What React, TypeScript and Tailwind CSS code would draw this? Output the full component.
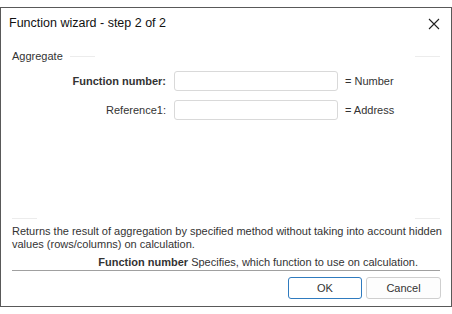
import React from "react";

export default function App() {
  const font = { fontFamily: '"Liberation Sans", Arial, sans-serif' };
  return (
    <div className="w-[452px] h-[314px] bg-white pt-[7px]" style={font}>
      <div className="w-[452px] h-[300px] border border-[#595959] bg-white flex flex-col text-[11px] text-[#333]">
        <div className="h-[31px] flex items-center justify-between pl-[8px] pr-[10px] shrink-0">
          <span className="text-[12.5px] text-[#111] leading-none">Function wizard - step 2 of 2</span>
          <svg width="12" height="12" viewBox="0 0 12 12" className="mr-[1px]">
            <path d="M1 1 L11 11 M11 1 L1 11" stroke="#222" strokeWidth="1.1" fill="none" />
          </svg>
        </div>
        <div className="h-[16px] mt-[9px] flex items-center px-[11px] shrink-0">
          <span className="leading-none">Aggregate</span>
          <div className="ml-[7px] w-[25px] h-px bg-[#ececec]" />
          <div className="flex-1" />
          <div className="w-[25px] h-px bg-[#ececec]" />
        </div>
        <div className="mt-[7px] flex flex-col gap-[9px] shrink-0">
          <div className="flex items-center h-[20px]">
            <div className="w-[165px] text-right font-bold">Function number:</div>
            <div className="ml-[8px] w-[164px] h-[20px] border border-[#d9d9d9] rounded-[3px] bg-white" />
            <div className="ml-[7px]">= Number</div>
          </div>
          <div className="flex items-center h-[20px]">
            <div className="w-[165px] text-right">Reference1:</div>
            <div className="ml-[8px] w-[164px] h-[20px] border border-[#d9d9d9] rounded-[3px] bg-white" />
            <div className="ml-[7px]">= Address</div>
          </div>
        </div>
        <div className="flex-1" />
        <div className="flex items-center px-[11px] shrink-0">
          <div className="w-[25px] h-px bg-[#ececec]" />
          <div className="flex-1" />
          <div className="w-[25px] h-px bg-[#ececec]" />
        </div>
        <div className="pl-[11px] pr-[6px] mt-[6px] leading-[13px] shrink-0">
          Returns the result of aggregation by specified method without taking into account hidden values (rows/columns) on calculation.
        </div>
        <div className="mt-[4px] text-right pr-[33px] leading-[14px] shrink-0">
          <span className="font-bold">Function number</span> Specifies, which function to use on calculation.
        </div>
        <div className="mx-[11px] mt-[1px] h-px bg-[#a0a0a0] shrink-0" />
        <div className="flex justify-end gap-[4px] pr-[10px] mt-[6px] mb-[7px] shrink-0">
          <button className="w-[74px] h-[22px] border border-[#2f7bbf] rounded-[3px] bg-white text-[#333] text-[11px]">OK</button>
          <button className="w-[75px] h-[22px] border border-[#cfcfcf] rounded-[3px] bg-[#fdfdfd] text-[#333] text-[11px]">Cancel</button>
        </div>
      </div>
    </div>
  );
}
